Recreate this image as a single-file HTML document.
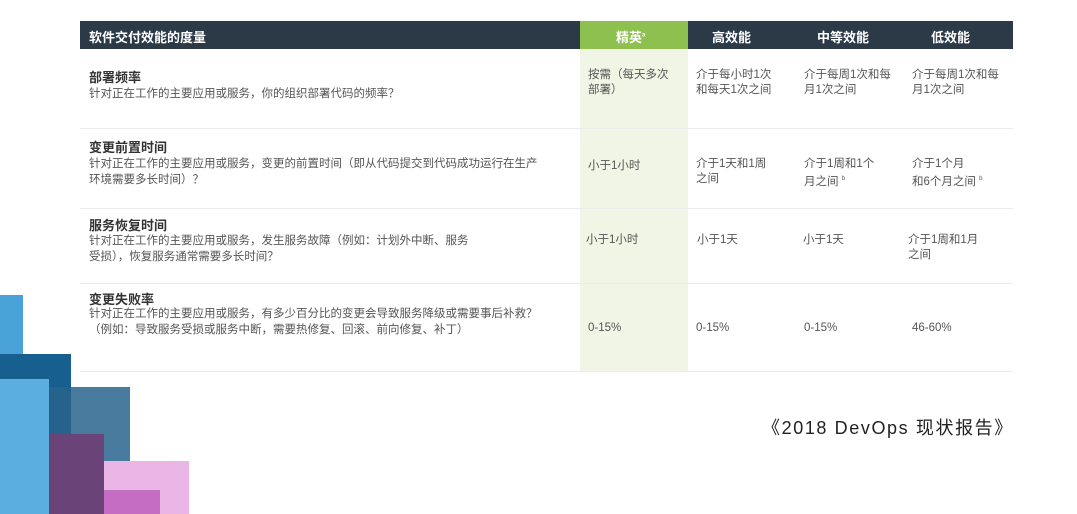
<!DOCTYPE html>
<html><head><meta charset="utf-8"><style>
body{margin:0;width:1077px;height:514px;background:#fff;position:relative;overflow:hidden;font-family:"Liberation Sans","Noto Sans CJK SC",sans-serif;}
.a{position:absolute}
.hd{left:80px;top:21px;width:933px;height:28px;background:#2c3a48}
.hd span{position:absolute;top:6px;color:#fff;font-size:13px;font-weight:bold}
.green{left:580px;top:21px;width:108px;height:350px;background:#f0f5e6}
.gh{left:580px;top:21px;width:108px;height:28px;background:#8dc04f}
.line{position:absolute;left:80px;width:933px;height:1px;background:#ebebeb}
.t{position:absolute;font-size:11.5px;color:#555;line-height:16px;white-space:nowrap}
.b{position:absolute;font-size:13px;font-weight:bold;color:#333}
.s{position:absolute;font-size:11.5px;color:#555;line-height:15px;white-space:nowrap}
.r{position:absolute}
</style></head><body>
<div class="a green"></div>
<div class="a hd"><span style="left:9px">软件交付效能的度量</span><span style="left:632px">高效能</span><span style="left:737px">中等效能</span><span style="left:851px">低效能</span></div>
<div class="a gh"><span style="position:absolute;left:36px;top:6px;color:#fff;font-size:13px;font-weight:bold">精英<sup style="font-size:6px">a</sup></span></div>
<div class="line" style="top:128px"></div><div class="line" style="top:208px"></div><div class="line" style="top:283px"></div><div class="line" style="top:371px"></div>

<div class="b" style="left:89px;top:67px">部署频率</div>
<div class="t" style="left:89px;top:86px">针对正在工作的主要应用或服务，你的组织部署代码的频率？</div>
<div class="s" style="left:588px;top:68px">按需（每天多次<br>部署）</div>
<div class="s" style="left:696px;top:68px">介于每小时1次<br>和每天1次之间</div>
<div class="s" style="left:804px;top:68px">介于每周1次和每<br>月1次之间</div>
<div class="s" style="left:912px;top:68px">介于每周1次和每<br>月1次之间</div>

<div class="b" style="left:89px;top:137px">变更前置时间</div>
<div class="t" style="left:89px;top:156px">针对正在工作的主要应用或服务，变更的前置时间（即从代码提交到代码成功运行在生产<br>环境需要多长时间）？</div>
<div class="s" style="left:588px;top:159px">小于1小时</div>
<div class="s" style="left:696px;top:157px">介于1天和1周<br>之间</div>
<div class="s" style="left:804px;top:157px">介于1周和1个<br>月之间 <sup style="font-size:6px">b</sup></div>
<div class="s" style="left:912px;top:157px">介于1个月<br>和6个月之间 <sup style="font-size:6px">b</sup></div>

<div class="b" style="left:89px;top:215px">服务恢复时间</div>
<div class="t" style="left:89px;top:233px">针对正在工作的主要应用或服务，发生服务故障（例如：计划外中断、服务<br>受损），恢复服务通常需要多长时间？</div>
<div class="s" style="left:586px;top:233px">小于1小时</div>
<div class="s" style="left:697px;top:233px">小于1天</div>
<div class="s" style="left:803px;top:233px">小于1天</div>
<div class="s" style="left:908px;top:233px">介于1周和1月<br>之间</div>

<div class="b" style="left:89px;top:289px">变更失败率</div>
<div class="t" style="left:89px;top:306px">针对正在工作的主要应用或服务，有多少百分比的变更会导致服务降级或需要事后补救？<br>（例如：导致服务受损或服务中断，需要热修复、回滚、前向修复、补丁）</div>
<div class="s" style="left:588px;top:321px">0-15%</div>
<div class="s" style="left:696px;top:321px">0-15%</div>
<div class="s" style="left:804px;top:321px">0-15%</div>
<div class="s" style="left:912px;top:321px">46-60%</div>

<div class="a" style="left:762px;top:414px;font-size:18px;color:#222;letter-spacing:1.6px">《2018 DevOps 现状报告》</div>

<div class="r" style="left:0;top:295px;width:23px;height:60px;background:#4aa3d8"></div>
<div class="r" style="left:0;top:354px;width:71px;height:160px;background:#165f8e"></div>
<div class="r" style="left:0;top:387px;width:130px;height:127px;background:rgba(40,100,140,0.85)"></div>
<div class="r" style="left:0;top:379px;width:49px;height:135px;background:#5aaee0"></div>
<div class="r" style="left:49px;top:434px;width:55px;height:80px;background:#6a4378"></div>
<div class="r" style="left:104px;top:461px;width:85px;height:53px;background:#e9b6e6"></div>
<div class="r" style="left:104px;top:490px;width:56px;height:24px;background:#c56cc3"></div>
</body></html>
